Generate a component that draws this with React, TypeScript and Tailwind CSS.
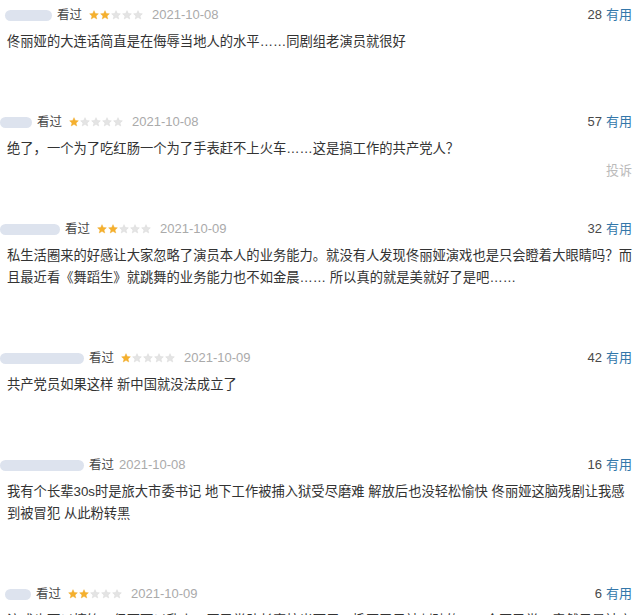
import React from "react";

type Review = {
  blobMl: number;
  blobW: number;
  stars: number;
  date: string;
  count: number;
  lines: string[];
  report?: boolean;
};

const reviews: Review[] = [
  {
    blobMl: 5,
    blobW: 47,
    stars: 2,
    date: "2021-10-08",
    count: 28,
    lines: ["佟丽娅的大连话简直是在侮辱当地人的水平……同剧组老演员就很好"],
  },
  {
    blobMl: 0,
    blobW: 32,
    stars: 1,
    date: "2021-10-08",
    count: 57,
    lines: ["绝了，一个为了吃红肠一个为了手表赶不上火车……这是搞工作的共产党人？"],
    report: true,
  },
  {
    blobMl: 0,
    blobW: 60,
    stars: 2,
    date: "2021-10-09",
    count: 32,
    lines: [
      "私生活圈来的好感让大家忽略了演员本人的业务能力。就没有人发现佟丽娅演戏也是只会瞪着大眼睛吗？而",
      "且最近看《舞蹈生》就跳舞的业务能力也不如金晨…… 所以真的就是美就好了是吧……",
    ],
  },
  {
    blobMl: 0,
    blobW: 84,
    stars: 1,
    date: "2021-10-09",
    count: 42,
    lines: ["共产党员如果这样 新中国就没法成立了"],
  },
  {
    blobMl: 0,
    blobW: 84,
    stars: 0,
    date: "2021-10-08",
    count: 16,
    lines: [
      "我有个长辈30s时是旅大市委书记 地下工作被捕入狱受尽磨难 解放后也没轻松愉快 佟丽娅这脑残剧让我感",
      "到被冒犯 从此粉转黑",
    ],
  },
  {
    blobMl: 5,
    blobW: 26,
    stars: 2,
    date: "2021-10-09",
    count: 6,
    lines: ["演戏也可以搞笑，但不可以乱来，国民党队长真拉光面用刀撬开了只被刺破的口，全国民党，竟然只是被害"],
  },
];

function Star({ filled }: { filled: boolean }) {
  return (
    <svg width="10" height="10" viewBox="0 0 24 24" className="block">
      <path
        d="M12 1.5l3.1 6.9 7.4.7-5.6 5 1.7 7.4L12 17.6l-6.6 3.9 1.7-7.4-5.6-5 7.4-.7z"
        fill={filled ? "#f5b02e" : "#e4e4e4"}
        stroke={filled ? "#eea821" : "#d6d6d6"}
        strokeWidth="1"
      />
    </svg>
  );
}

function Stars({ n }: { n: number }) {
  return (
    <span className="ml-[7px] flex items-center gap-[1px]">
      {[0, 1, 2, 3, 4].map((i) => (
        <Star key={i} filled={i < n} />
      ))}
    </span>
  );
}

export default function App() {
  return (
    <div
      className="w-[640px] h-[615px] overflow-hidden bg-white pt-[4px]"
      style={{ fontFamily: '"Liberation Sans", "Noto Sans CJK SC", sans-serif' }}
    >
      {reviews.map((r, idx) => (
        <div key={idx} className="pl-[7px] pr-[8px] pb-[36px]">
          <div className="flex items-center h-[22px] text-[13px]">
            <span
              className="h-[11px] rounded-full bg-[#dde3ee]"
              style={{ marginLeft: r.blobMl - 7, width: r.blobW }}
            />
            <span className="ml-[5px] text-[12.5px] text-[#494949]">看过</span>
            {r.stars > 0 ? <Stars n={r.stars} /> : null}
            <span className={`${r.stars > 0 ? "ml-[9px]" : "ml-[5px]"} text-[#aaa]`}>{r.date}</span>
            <span className="ml-auto text-[#494949]">{r.count}</span>
            <span className="ml-[4px] text-[#3377aa]">有用</span>
          </div>
          <div className="mt-[5px] text-[13.3px] leading-[22px] text-[#333]">
            {r.lines.map((l, i) => (
              <div key={i} className="whitespace-nowrap">
                {l}
              </div>
            ))}
          </div>
          <div className="h-[22px] flex items-center justify-end text-[13px] text-[#bbb]">
            {r.report ? "投诉" : ""}
          </div>
        </div>
      ))}
    </div>
  );
}
